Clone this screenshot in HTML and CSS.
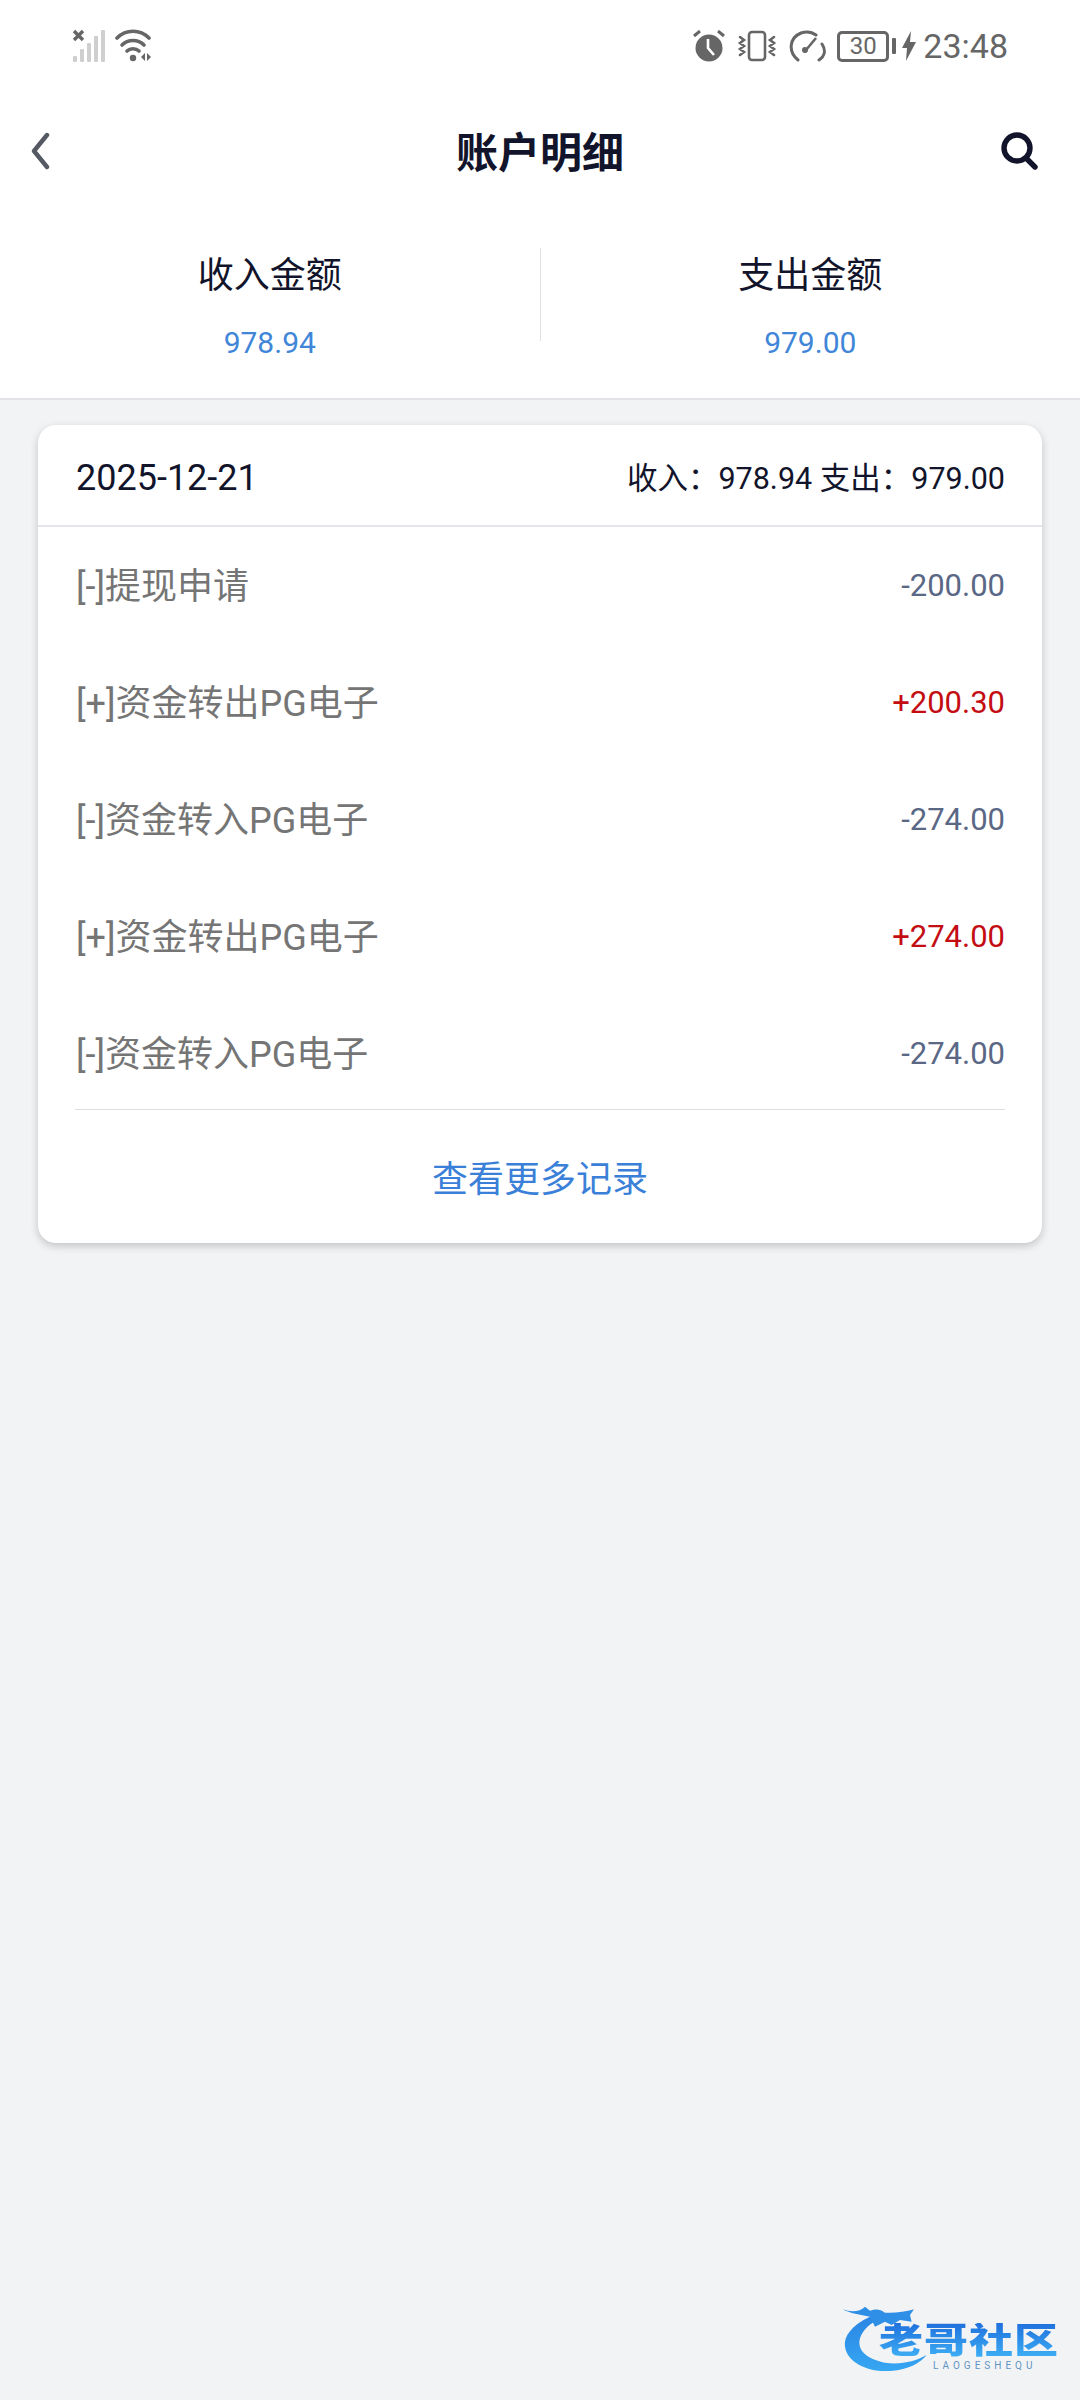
FILE: index.html
```html
<!DOCTYPE html>
<html lang="zh-CN">
<head>
<meta charset="UTF-8" />
<meta name="viewport" content="width=device-width, initial-scale=1" />
<title>账户明细</title>
<link rel="stylesheet" href="styles.css">
</head>
<body>

<div class="status-bar">
  <div class="status-left">
    <svg width="34" height="34" viewBox="0 0 34 34">
      <path d="M2 2l9 9M11 2l-9 9" stroke="#666" stroke-width="3.4" fill="none"/>
      <g fill="#cfcfcf">
        <rect x="1" y="27" width="4" height="6" rx="1"/>
        <rect x="8" y="20" width="4" height="13" rx="1"/>
        <rect x="15" y="14" width="4" height="19" rx="1"/>
        <rect x="22" y="7" width="4" height="26" rx="1"/>
        <rect x="29" y="1" width="4" height="32" rx="1"/>
      </g>
    </svg>
    <svg width="38" height="34" viewBox="0 0 38 34">
      <g fill="none" stroke="#666" stroke-width="3.6" stroke-linecap="round">
        <path d="M2 9C11 0 25 0 34 9"/>
        <path d="M7 16C13 10 23 10 29 16"/>
        <path d="M12 22C15 19 21 19 24 22"/>
      </g>
      <circle cx="18" cy="29" r="3.2" fill="#666"/>
      <path d="M30 24v8l-4-4zM32 24v8l4-4z" fill="#666"/>
    </svg>
  </div>
  <div class="status-right">
    <svg width="32" height="32" viewBox="0 0 32 32">
      <circle cx="16" cy="18" r="13.5" fill="#666"/>
      <path d="M1 6l6-5M31 6l-6-5" stroke="#666" stroke-width="3" fill="none"/>
      <path d="M15 9v9l6 7" stroke="#fff" stroke-width="2.6" fill="none"/>
    </svg>
    <svg width="40" height="32" viewBox="0 0 40 32">
      <rect x="12" y="2" width="16" height="28" rx="3" fill="none" stroke="#666" stroke-width="2.6"/>
      <path d="M3 7l4 3-4 3 4 3-4 3 4 3-4 3M37 7l-4 3 4 3-4 3 4 3-4 3 4 3" stroke="#666" stroke-width="2.6" fill="none" stroke-linecap="round"/>
    </svg>
    <svg width="38" height="32" viewBox="0 0 38 32">
      <path d="M9 30C-1 22 0 8 12 3c6-2 11-1 15 2M33 14c4 6 3 12-3 16" stroke="#666" stroke-width="3" fill="none" stroke-linecap="round"/>
      <path d="M17 20L27 8" stroke="#666" stroke-width="2.6"/>
      <circle cx="16" cy="20" r="3" fill="#666"/>
    </svg>
    <div class="battery"><span class="battery-level">30</span></div>
    <div class="battery-tip"></div>
    <svg class="bolt" width="14" height="30" viewBox="0 0 14 30">
      <path d="M9 0L0 17h5L4 30l10-19H8z" fill="#666"/>
    </svg>
    <span class="status-time">23:48</span>
  </div>
</div>

<div class="nav-bar">
  <svg class="nav-back" width="22" height="38" viewBox="0 0 22 38">
    <path d="M18 3L5 19l13 16" fill="none" stroke="#555964" stroke-width="4.4" stroke-linecap="round" stroke-linejoin="round"/>
  </svg>
  <h1 class="nav-title">账户明细</h1>
  <svg class="nav-search" width="38" height="38" viewBox="0 0 38 38">
    <circle cx="17" cy="16" r="13" fill="none" stroke="#11142a" stroke-width="5.4"/>
    <path d="M26 26l9 9" stroke="#11142a" stroke-width="5.4" stroke-linecap="round"/>
  </svg>
</div>

<div class="summary">
  <div class="summary-col">
    <div class="summary-label">收入金额</div>
    <div class="summary-value">978.94</div>
  </div>
  <div class="summary-col">
    <div class="summary-label">支出金额</div>
    <div class="summary-value">979.00</div>
  </div>
</div>

<div class="card">
  <div class="card-head">
    <span class="card-date">2025-12-21</span>
    <span class="card-totals">收入：978.94 支出：979.00</span>
  </div>
  <div class="rows">
    <div class="row"><span class="row-name">[-]提现申请</span><span class="row-amount">-200.00</span></div>
    <div class="row"><span class="row-name">[+]资金转出PG电子</span><span class="row-amount plus">+200.30</span></div>
    <div class="row"><span class="row-name">[-]资金转入PG电子</span><span class="row-amount">-274.00</span></div>
    <div class="row"><span class="row-name">[+]资金转出PG电子</span><span class="row-amount plus">+274.00</span></div>
    <div class="row"><span class="row-name">[-]资金转入PG电子</span><span class="row-amount">-274.00</span></div>
  </div>
  <div class="more"><span class="more-link">查看更多记录</span></div>
</div>

<div class="watermark">
  <svg class="watermark-mark" width="260" height="120" viewBox="0 0 780 360">
    <defs>
      <linearGradient id="dragon" x1="0" y1="0" x2="0" y2="1">
        <stop offset="0" stop-color="#2b86e4"/>
        <stop offset="1" stop-color="#36a6f2"/>
      </linearGradient>
    </defs>
    <path d="M150 110C95 135 70 170 75 200C82 250 150 280 220 272C265 268 300 250 320 225C285 245 240 255 195 248C140 238 110 210 120 175C128 150 150 130 175 120Z" fill="url(#dragon)"/>
    <path d="M68 88C95 98 120 95 135 80L150 92C170 85 180 88 195 98C225 100 255 95 282 88L270 105L275 125L240 120L215 135L195 125L165 140L150 110C120 105 90 100 68 88Z" fill="#2f8fe6"/>
  </svg>
  <div class="watermark-name">老哥社区</div>
  <div class="watermark-sub">LAOGESHEQU</div>
</div>

</body>
</html>
```

FILE: styles.css
```css
* { box-sizing: border-box; }
html, body { margin: 0; padding: 0; }
body {
  width: 1080px;
  height: 2400px;
  position: relative;
  overflow: hidden;
  background: #f2f3f5;
  font-family: Roboto, "Noto Sans CJK SC", sans-serif;
  color: #11142a;
}

.status-bar {
  height: 90px;
  padding: 29px 72px 0 72px;
  background: #fff;
  display: flex;
  justify-content: space-between;
  align-items: flex-start;
}
.status-bar svg { display: block; }
.status-left { display: flex; gap: 9px; }
.status-right {
  display: flex;
  align-items: center;
  height: 34px;
  gap: 12px;
}
.battery {
  width: 52px;
  height: 31px;
  border: 3px solid #666;
  border-radius: 5px;
  display: flex;
  align-items: center;
  justify-content: center;
  margin-left: -2px;
}
.battery-level { font-size: 24px; line-height: 1; color: #666; }
.battery-tip {
  width: 4px;
  height: 16px;
  background: #666;
  border-radius: 1px;
  margin-left: -9px;
}
.bolt { margin-left: -6px; }
.status-time { font-size: 34px; line-height: 34px; color: #666; margin-left: -5px; }

.nav-bar {
  height: 126px;
  background: #fff;
  display: grid;
  grid-template-columns: 1fr auto 1fr;
  align-items: center;
  padding: 0 42px 0 29px;
}
.nav-back, .nav-search { margin-bottom: 4px; }
.nav-search { justify-self: end; }
.nav-title {
  margin: 2px 0 0 13px;
  font-size: 42px;
  font-weight: 700;
  line-height: 60px;
}

.summary {
  height: 184px;
  padding-top: 32px;
  background: #fff;
  border-bottom: 2px solid #e2e3e6;
  display: flex;
  align-items: flex-start;
}
.summary-col {
  flex: 1;
  height: 93px;
  padding-top: 3px;
  text-align: center;
}
.summary-col + .summary-col { border-left: 1px solid #dfe0e3; }
.summary-label { font-size: 36px; line-height: 50px; }
.summary-value { font-size: 30px; line-height: 40px; margin-top: 22px; color: #3f86d8; }

.card {
  margin: 25px 38px 0;
  height: 818px;
  background: #fff;
  border-radius: 18px;
  box-shadow: 0 3px 8px rgba(0, 0, 0, 0.2);
}
.card-head {
  height: 102px;
  padding: 0 37px 0 38px;
  border-bottom: 2px solid #e4e5e8;
  display: flex;
  align-items: center;
  justify-content: space-between;
}
.card-date { font-size: 36px; margin-top: 5px; }
.card-totals { font-size: 30.5px; margin-top: 1px; }

.rows {
  margin: 0 37px 0 37px;
  border-bottom: 1px solid #dcdde0;
  height: 583px;
}
.row {
  height: 117px;
  padding-left: 1px;
  display: flex;
  align-items: center;
  justify-content: space-between;
}
.row-name { font-size: 36px; color: #757575; margin-top: -6px; }
.row-amount { font-size: 31px; color: #5a6785; }
.row-amount.plus { color: #c40d12; }

.more {
  height: 132px;
  display: flex;
  align-items: center;
  justify-content: center;
}
.more-link { font-size: 36px; color: #3b80d8; }

.watermark {
  position: absolute;
  left: 842px;
  top: 2304px;
  width: 220px;
  height: 76px;
}
.watermark-mark { position: absolute; left: -22px; top: -24px; }
.watermark-name {
  position: absolute;
  left: 37px;
  top: 14px;
  font-size: 44px;
  font-weight: 900;
  line-height: 46px;
  letter-spacing: 1px;
  white-space: nowrap;
  color: #2a8ce8;
  background: linear-gradient(#1f6fdc, #3fb2f6);
  -webkit-background-clip: text;
  background-clip: text;
  -webkit-text-fill-color: transparent;
  transform: scaleY(0.8);
}
.watermark-sub {
  position: absolute;
  left: 91px;
  top: 56px;
  font-size: 10px;
  letter-spacing: 4px;
  line-height: 12px;
  white-space: nowrap;
  color: #5f95c5;
}
```
